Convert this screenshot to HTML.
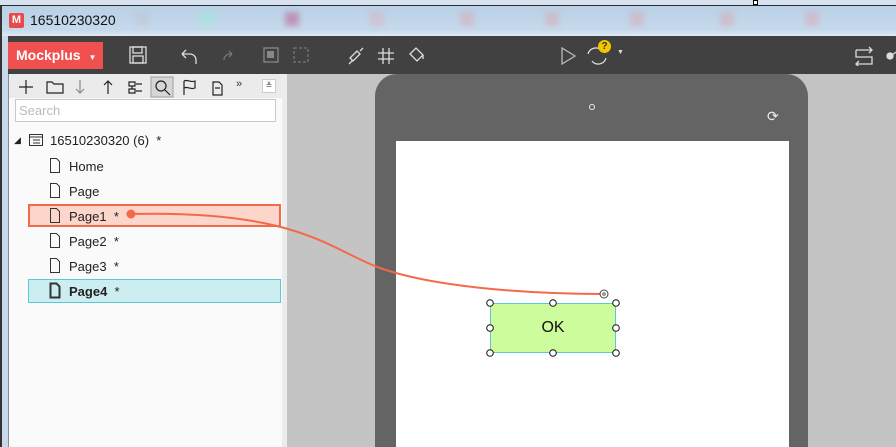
<!DOCTYPE html>
<html><head><meta charset="utf-8"><style>
*{margin:0;padding:0;box-sizing:border-box}
html,body{width:896px;height:447px;overflow:hidden}
body{position:relative;background:#c4c4c4;font-family:"Liberation Sans",sans-serif}
.a{position:absolute}
</style></head><body>
<div class="a" style="left:0;top:0;width:896px;height:36px;background:linear-gradient(#d6e2ef 0,#d6e2ef 5px,#2a2a2a 5px,#2a2a2a 6px,#b9d0e6 6px,#c6d9ec 30px,#dfe9f3 36px)"></div>
<div class="a" style="left:0;top:6px;width:2px;height:441px;background:#333"></div>
<div class="a" style="left:2px;top:36px;width:7px;height:411px;background:#c9d9ea;border-right:1px solid #7a8fa5"></div>
<div class="a" style="left:9px;top:13px;width:15px;height:15px;background:#e84a4a;border-radius:2px;color:#fff;font-size:11px;font-weight:bold;text-align:center;line-height:15px">M</div>
<div class="a" style="left:30px;top:12px;font-size:14px;color:#111">16510230320</div>
<div class="a" style="left:130px;top:12px;width:740px;height:16px;filter:blur(3px);opacity:.3">
 <span class="a" style="left:5px;width:14px;height:14px;background:#bbb"></span>
 <span class="a" style="left:70px;width:14px;height:14px;background:#7fc"></span>
 <span class="a" style="left:155px;width:14px;height:14px;background:#b04"></span>
 <span class="a" style="left:240px;width:14px;height:14px;background:#e99"></span>
 <span class="a" style="left:330px;width:14px;height:14px;background:#e88"></span>
 <span class="a" style="left:415px;width:14px;height:14px;background:#e88"></span>
 <span class="a" style="left:500px;width:14px;height:14px;background:#e88"></span>
 <span class="a" style="left:590px;width:14px;height:14px;background:#e88"></span>
 <span class="a" style="left:675px;width:14px;height:14px;background:#e88"></span>
</div>
<div class="a" style="left:753px;top:0;width:5px;height:5px;border:1px solid #000;background:#fff"></div>
<div class="a" style="left:8px;top:36px;width:888px;height:38px;background:#414141"></div>
<div class="a" style="left:8px;top:42px;width:95px;height:27px;background:#f05050;color:#fff;font-size:14px;font-weight:bold;line-height:27px;padding-left:8px">Mockplus <span style="font-size:8px;margin-left:4px">▼</span></div>
<svg class="a" style="left:120px;top:40px" width="520" height="32" fill="none" stroke="#ddd" stroke-width="1.3">
 <rect x="10" y="7" width="16" height="16"/><rect x="13" y="7" width="9" height="6"/><rect x="13" y="16" width="10" height="7"/>
 <path d="M62 14h8a6 6 0 0 1 6 6v4M62 14l4-4M62 14l4 4"/>
 <path d="M104 20a6 6 0 0 1 6-6h2M112 14l-3-3M112 14l-3 3" stroke="#777"/>
 <rect x="144" y="8" width="14" height="14" stroke="#888"/><rect x="147" y="11" width="7" height="7" fill="#888" stroke="none"/>
 <rect x="174" y="8" width="14" height="14" stroke="#777" stroke-dasharray="3 2"/>
 <path d="M230 18l7-7 3 3-7 7zM240 11l3-3M233 20l-4 4"/>
 <path d="M263 8v16M269 8v16M258 13h16M258 19h16"/>
 <path d="M290 14l6-6 7 7-6 6zM303 15v4"/>
 <path d="M442 8v16l13-8z" stroke="#bbb"/>
 <path d="M468 14a8 8 0 0 1 14-3M486 18a8 8 0 0 1-14 3"/>
</svg>
<div class="a" style="left:598px;top:40px;width:13px;height:13px;border-radius:50%;background:#f5c400;color:#333;font-size:10px;font-weight:bold;text-align:center;line-height:13px">?</div>
<div class="a" style="left:617px;top:49px;color:#ddd;font-size:7px">▼</div>
<svg class="a" style="left:850px;top:44px" width="46" height="22" fill="none" stroke="#ddd" stroke-width="1.3">
 <path d="M6 6h16M6 6v7h16v7H6M19 3l3 3-3 3M9 17l-3 3 3 3"/>
 <circle cx="40" cy="12" r="3" fill="#ddd"/><path d="M40 12l8-5"/>
</svg>
<div class="a" style="left:9px;top:74px;width:273px;height:373px;background:#fafafa"></div>
<div class="a" style="left:282px;top:74px;width:5px;height:373px;background:#ececec"></div>
<div class="a" style="left:9px;top:74px;width:273px;height:24px;background:#ebebeb"></div>
<svg class="a" style="left:12px;top:76px" width="270" height="22" fill="none" stroke="#222" stroke-width="1.2">
 <path d="M14 4v14M7 11h14"/>
 <path d="M35 6h5l2 2h9v9H35z"/>
 <path d="M68 4v13M64 13l4 4 4-4" stroke="#888"/>
 <path d="M96 18V5M92 9l4-4 4 4"/>
 <path d="M117 6h6v4h-6zM124 8h6M117 13h6v4h-6zM124 15h6M120 10v3"/>
 <rect x="139" y="1" width="22" height="20" fill="#d6d6d6" stroke="#aaa"/>
 <circle cx="149" cy="10" r="5"/><path d="M153 14l5 5"/>
 <path d="M172 5v14M172 5c4-2 6 2 11 0v7c-5 2-7-2-11 0"/>
 <path d="M201 6h6l3 3v10h-9zM203 12h5" />
</svg>
<div class="a" style="left:236px;top:78px;font-size:11px;color:#333">»</div>
<div class="a" style="left:262px;top:79px;width:14px;height:14px;background:#fff;border:1px solid #ccc;font-size:8px;text-align:center;line-height:12px;color:#444">≚</div>
<div class="a" style="left:15px;top:99px;width:261px;height:23px;background:#fff;border:1px solid #c8c8c8;font-size:13px;color:#bbb;padding:3px 0 0 3px">Search</div>
<div class="a" style="left:14px;top:135px;font-size:9px;color:#222">◢</div>
<svg class="a" style="left:28px;top:133px" width="16" height="14" fill="none" stroke="#333"><rect x="1.5" y="1.5" width="13" height="11"/><path d="M1.5 4h13M5 7h7M5 10h7"/></svg>
<div class="a" style="left:50px;top:133px;font-size:13px;color:#222">16510230320 (6) &nbsp;*</div>
<div class="a" style="left:28px;top:204px;width:253px;height:23px;background:#fcd5cb;border:2px solid #f36a4a"></div>
<div class="a" style="left:28px;top:279px;width:253px;height:24px;background:#cdeef1;border:1px solid #5cc8d6"></div>
<div class="a" style="left:48px;top:157px;width:14px;height:160px">
<svg width="14" height="160" fill="none" stroke="#333"><path d="M2.5 1.5h6l3 3v11h-9z"/><path d="M2.5 26.5h6l3 3v11h-9z"/><path d="M2.5 51.5h6l3 3v11h-9z"/><path d="M2.5 76.5h6l3 3v11h-9z"/><path d="M2.5 101.5h6l3 3v11h-9z"/><path d="M2.5 126.5h6l3 3v11h-9z" stroke-width="2"/></svg></div>
<div class="a" style="left:69px;top:154px;font-size:13px;color:#222;line-height:25px">Home<br>Page<br>Page1 &nbsp;*<br>Page2 &nbsp;*<br>Page3 &nbsp;*<br><b>Page4</b> &nbsp;*</div>
<div class="a" style="left:375px;top:74px;width:433px;height:373px;background:#646464;border-radius:22px 22px 0 0"></div>
<div class="a" style="left:589px;top:104px;width:6px;height:6px;border:1px solid #eee;border-radius:50%"></div>
<div class="a" style="left:767px;top:108px;color:#eee;font-size:14px">⟳</div>
<div class="a" style="left:396px;top:141px;width:393px;height:306px;background:#fff"></div>
<div class="a" style="left:490px;top:303px;width:126px;height:50px;background:#ccfc9b;border:1px solid #5cc8d6;font-size:16px;text-align:center;line-height:48px;color:#111">OK</div>
<svg class="a" style="left:0;top:0" width="896" height="447" fill="none">
 <path d="M131 214C300 210 330 250 380 268S520 294 604 294" stroke="#f36a4a" stroke-width="2"/>
 <circle cx="131" cy="214" r="4.5" fill="#f36a4a"/>
 <circle cx="604" cy="294" r="4" stroke="#444" fill="#fff"/><circle cx="604" cy="294" r="2" fill="#999"/>
 <g fill="#fff" stroke="#111"><circle cx="490" cy="303" r="3.3"/><circle cx="553" cy="303" r="3.3"/><circle cx="616" cy="303" r="3.3"/><circle cx="490" cy="328" r="3.3"/><circle cx="616" cy="328" r="3.3"/><circle cx="490" cy="353" r="3.3"/><circle cx="553" cy="353" r="3.3"/><circle cx="616" cy="353" r="3.3"/></g>
</svg>
</body></html>
